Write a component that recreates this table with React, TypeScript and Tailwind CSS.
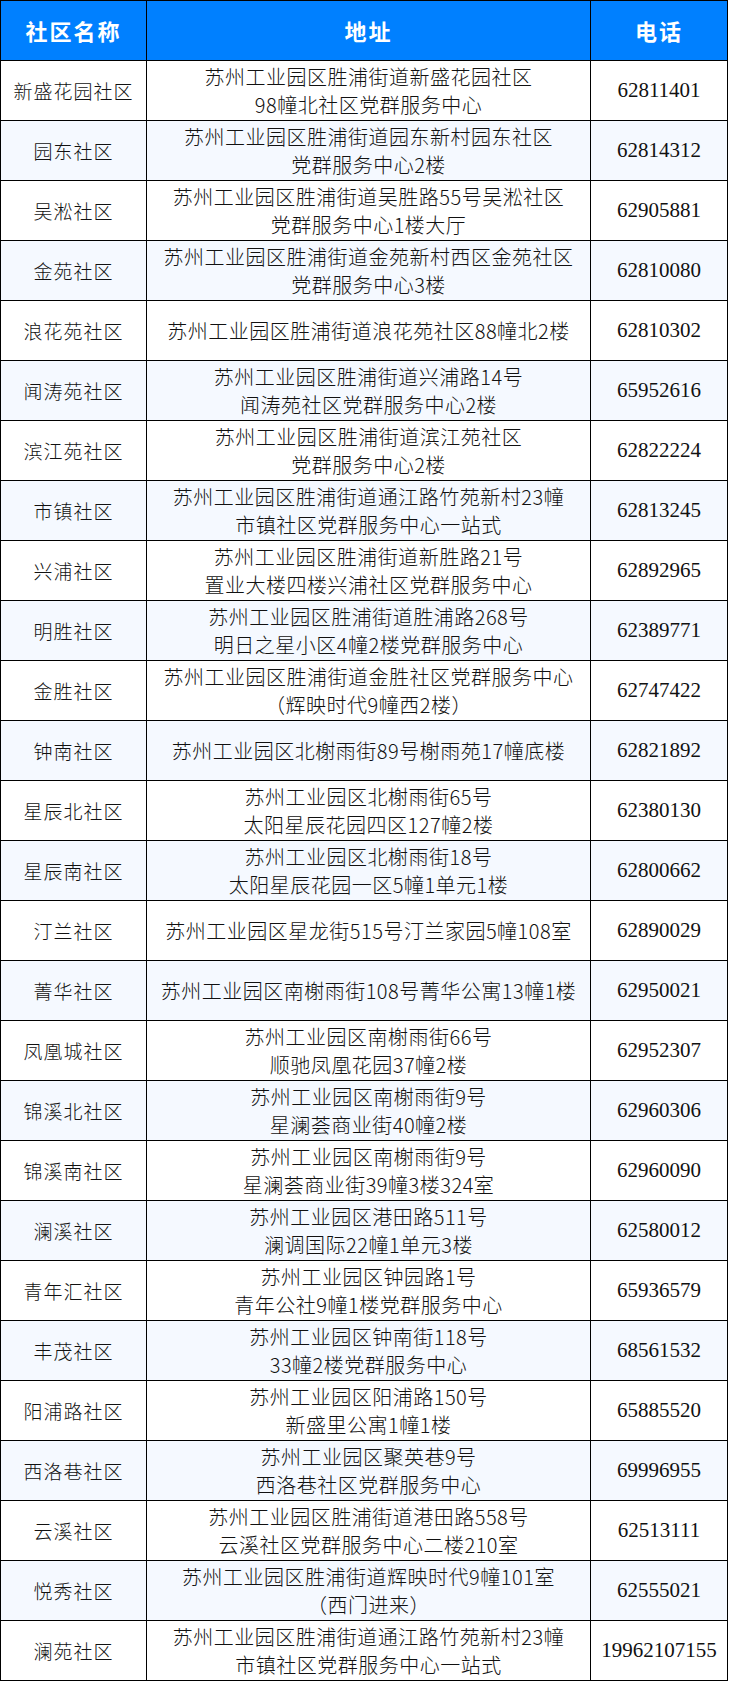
import React from "react";

const rows: [string, string[], string][] = [
  ["新盛花园社区", ["苏州工业园区胜浦街道新盛花园社区", "98幢北社区党群服务中心"], "62811401"],
  ["园东社区", ["苏州工业园区胜浦街道园东新村园东社区", "党群服务中心2楼"], "62814312"],
  ["吴淞社区", ["苏州工业园区胜浦街道吴胜路55号吴淞社区", "党群服务中心1楼大厅"], "62905881"],
  ["金苑社区", ["苏州工业园区胜浦街道金苑新村西区金苑社区", "党群服务中心3楼"], "62810080"],
  ["浪花苑社区", ["苏州工业园区胜浦街道浪花苑社区88幢北2楼"], "62810302"],
  ["闻涛苑社区", ["苏州工业园区胜浦街道兴浦路14号", "闻涛苑社区党群服务中心2楼"], "65952616"],
  ["滨江苑社区", ["苏州工业园区胜浦街道滨江苑社区", "党群服务中心2楼"], "62822224"],
  ["市镇社区", ["苏州工业园区胜浦街道通江路竹苑新村23幢", "市镇社区党群服务中心一站式"], "62813245"],
  ["兴浦社区", ["苏州工业园区胜浦街道新胜路21号", "置业大楼四楼兴浦社区党群服务中心"], "62892965"],
  ["明胜社区", ["苏州工业园区胜浦街道胜浦路268号", "明日之星小区4幢2楼党群服务中心"], "62389771"],
  ["金胜社区", ["苏州工业园区胜浦街道金胜社区党群服务中心", "（辉映时代9幢西2楼）"], "62747422"],
  ["钟南社区", ["苏州工业园区北榭雨街89号榭雨苑17幢底楼"], "62821892"],
  ["星辰北社区", ["苏州工业园区北榭雨街65号", "太阳星辰花园四区127幢2楼"], "62380130"],
  ["星辰南社区", ["苏州工业园区北榭雨街18号", "太阳星辰花园一区5幢1单元1楼"], "62800662"],
  ["汀兰社区", ["苏州工业园区星龙街515号汀兰家园5幢108室"], "62890029"],
  ["菁华社区", ["苏州工业园区南榭雨街108号菁华公寓13幢1楼"], "62950021"],
  ["凤凰城社区", ["苏州工业园区南榭雨街66号", "顺驰凤凰花园37幢2楼"], "62952307"],
  ["锦溪北社区", ["苏州工业园区南榭雨街9号", "星澜荟商业街40幢2楼"], "62960306"],
  ["锦溪南社区", ["苏州工业园区南榭雨街9号", "星澜荟商业街39幢3楼324室"], "62960090"],
  ["澜溪社区", ["苏州工业园区港田路511号", "澜调国际22幢1单元3楼"], "62580012"],
  ["青年汇社区", ["苏州工业园区钟园路1号", "青年公社9幢1楼党群服务中心"], "65936579"],
  ["丰茂社区", ["苏州工业园区钟南街118号", "33幢2楼党群服务中心"], "68561532"],
  ["阳浦路社区", ["苏州工业园区阳浦路150号", "新盛里公寓1幢1楼"], "65885520"],
  ["西洛巷社区", ["苏州工业园区聚英巷9号", "西洛巷社区党群服务中心"], "69996955"],
  ["云溪社区", ["苏州工业园区胜浦街道港田路558号", "云溪社区党群服务中心二楼210室"], "62513111"],
  ["悦秀社区", ["苏州工业园区胜浦街道辉映时代9幢101室", "（西门进来）"], "62555021"],
  ["澜苑社区", ["苏州工业园区胜浦街道通江路竹苑新村23幢", "市镇社区党群服务中心一站式"], "19962107155"],
];

export default function App() {
  return (
    <div className="w-[729px] bg-white">
      <table className="w-[727px] table-fixed border-collapse text-[#111]">
        <colgroup>
          <col className="w-[146px]" />
          <col className="w-[444px]" />
          <col className="w-[137px]" />
        </colgroup>
        <thead>
          <tr className="bg-[#0080ff] text-white">
            {["社区名称", "地址", "电话"].map((h) => (
              <th
                key={h}
                className="h-[60px] border border-black p-0 text-center align-middle text-[22px] font-bold tracking-[2px] [font-family:'Noto_Sans_CJK_SC',sans-serif]"
              >
                {h}
              </th>
            ))}
          </tr>
        </thead>
        <tbody>
          {rows.map(([name, addr, tel], i) => (
            <tr key={i} className={i % 2 === 0 ? "bg-white" : "bg-[#f5f9ff]"}>
              <td className="h-[60px] border border-black p-0 text-center align-middle text-[19px] leading-[28px] tracking-[1px] font-light [font-family:'Noto_Sans_CJK_SC',sans-serif]">
                {name}
              </td>
              <td className="h-[60px] border border-black p-0 text-center align-middle text-[20px] leading-[28px] tracking-[0.5px] font-light [font-family:'Noto_Sans_CJK_SC',sans-serif]">
                {addr.map((l, j) => (
                  <div key={j} className="whitespace-nowrap">{l}</div>
                ))}
              </td>
              <td className="h-[60px] border border-black p-0 text-center align-middle text-[21px] [font-family:'Liberation_Serif',serif]">
                {tel}
              </td>
            </tr>
          ))}
        </tbody>
      </table>
    </div>
  );
}
